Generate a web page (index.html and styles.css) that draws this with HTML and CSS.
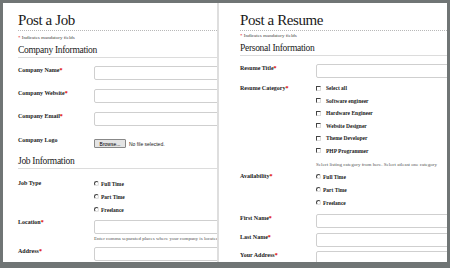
FILE: index.html
```html
<!DOCTYPE html>
<html lang="en">

<head>
    <meta charset="UTF-8">
    <meta name="viewport" content="width=device-width, initial-scale=1.0">
    <title>Post a Job / Post a Resume</title>
    <link rel="stylesheet" href="styles.css">
</head>

<body>
    <div class="frame">
        <!-- Janela da esquerda: vaga -->
        <div class="panel panel-job">
            <h1>Post a Job</h1>
            <p class="mandatory"><span class="req">*</span> Indicates mandatory fields</p>

            <h2 class="section">Company Information</h2>
            <div class="row">
                <label>Company Name<span class="req">*</span></label>
                <input type="text">
            </div>
            <div class="row">
                <label>Company Website<span class="req">*</span></label>
                <input type="text">
            </div>
            <div class="row">
                <label>Company Email<span class="req">*</span></label>
                <input type="text">
            </div>
            <div class="row row-file">
                <label>Company Logo</label>
                <div class="file">
                    <button type="button">Browse...</button>
                    <span>No file selected.</span>
                </div>
            </div>

            <h2 class="section section-job">Job Information</h2>
            <div class="row row-options">
                <label>Job Type</label>
                <div class="options">
                    <div class="option"><input type="radio" name="jobtype"> Full Time</div>
                    <div class="option"><input type="radio" name="jobtype"> Part Time</div>
                    <div class="option"><input type="radio" name="jobtype"> Freelance</div>
                </div>
            </div>
            <div class="row row-location">
                <label>Location<span class="req">*</span></label>
                <div class="field">
                    <input type="text">
                    <p class="hint">Enter comma separated places where your company is located</p>
                </div>
            </div>
            <div class="row row-address">
                <label>Address<span class="req">*</span></label>
                <input type="text">
            </div>
        </div>

        <!-- Janela da direita: currículo -->
        <div class="panel panel-resume">
            <h1>Post a Resume</h1>
            <p class="mandatory"><span class="req">*</span> Indicates mandatory fields</p>

            <h2 class="section">Personal Information</h2>
            <div class="row">
                <label>Resume Title<span class="req">*</span></label>
                <input type="text">
            </div>
            <div class="row row-options row-category">
                <label>Resume Category<span class="req">*</span></label>
                <div class="options checks">
                    <div class="option"><input type="checkbox"> Select all</div>
                    <div class="option"><input type="checkbox"> Software engineer</div>
                    <div class="option"><input type="checkbox"> Hardware Engineer</div>
                    <div class="option"><input type="checkbox"> Website Designer</div>
                    <div class="option"><input type="checkbox"> Theme Developer</div>
                    <div class="option"><input type="checkbox"> PHP Programmer</div>
                    <p class="hint">Select listing category from here. Select atleast one category</p>
                </div>
            </div>
            <div class="row row-options row-availability">
                <label>Availability<span class="req">*</span></label>
                <div class="options">
                    <div class="option"><input type="radio" name="avail"> Full Time</div>
                    <div class="option"><input type="radio" name="avail"> Part Time</div>
                    <div class="option"><input type="radio" name="avail"> Freelance</div>
                </div>
            </div>
            <div class="row row-tight">
                <label>First Name<span class="req">*</span></label>
                <input type="text">
            </div>
            <div class="row row-tight">
                <label>Last Name<span class="req">*</span></label>
                <input type="text">
            </div>
            <div class="row row-tight">
                <label>Your Address<span class="req">*</span></label>
                <input type="text">
            </div>
        </div>
    </div>
</body>

</html>
```

FILE: styles.css
```css
body {
    margin: 0;
    background-color: #707575;
    font-family: "Liberation Serif", "Times New Roman", serif;
    color: #1a1a1a;
}

.frame {
    display: flex;
    height: 268px;
    padding: 3px 3px 6px 3px;
    box-sizing: border-box;
}

.panel {
    background-color: white;
    overflow: hidden;
    padding-top: 9px;
    box-sizing: border-box;
}

.panel-job {
    width: 214px;
    padding-left: 15px;
}

.panel-resume {
    width: 230px;
    padding-left: 21px;
    border-left: 2px solid #dedede;
}

h1 {
    font-size: 15px;
    font-weight: normal;
    line-height: 16px;
    margin: 0;
    padding-bottom: 2px;
    border-bottom: 1px dotted #b8b8b8;
    letter-spacing: -0.4px;
}

.mandatory {
    font-size: 5px;
    line-height: 7px;
    margin: 3px 0 0;
    color: #444;
}

.panel-resume .mandatory {
    margin-top: 1px;
}

.req {
    color: #d00;
}

.section {
    font-size: 9.5px;
    font-weight: normal;
    line-height: 11px;
    margin: 4px 0 0;
    padding-bottom: 1px;
    border-bottom: 1px solid #dcdcdc;
    letter-spacing: -0.3px;
}

.panel-resume .section {
    margin-top: 3px;
    line-height: 12px;
}

.section-job {
    margin-top: 8px;
}

.row {
    display: flex;
    margin-top: 9px;
}

.panel-job .section + .row,
.panel-resume .section + .row {
    margin-top: 8px;
}

.row label {
    width: 76px;
    flex-shrink: 0;
    font-size: 6px;
    font-weight: bold;
    line-height: 8px;
}

.row input[type="text"] {
    display: block;
    width: 300px;
    height: 14px;
    margin: 0;
    padding: 0;
    border: 1px solid #cfcfcf;
    border-radius: 2px;
    box-sizing: border-box;
    flex-shrink: 0;
}

.field {
    display: flex;
    flex-direction: column;
}

.row-file {
    margin-top: 10px;
}

.file {
    display: flex;
    align-items: center;
    margin-top: 3px;
    font-size: 5px;
    white-space: nowrap;
}

.file button {
    width: 32px;
    height: 9px;
    padding: 0;
    margin-right: 3px;
    font-family: "Liberation Sans", Arial, sans-serif;
    font-size: 5px;
    background-color: #e4e4e4;
    border: 1px solid #888;
    border-radius: 1px;
}

.file span {
    font-family: "Liberation Sans", Arial, sans-serif;
}

.row-options {
    margin-top: 3px;
}

.row-options label {
    line-height: 13px;
}

.options {
    font-size: 5.5px;
    font-weight: bold;
    white-space: nowrap;
}

.option {
    display: flex;
    align-items: center;
    height: 13px;
}

.option input {
    appearance: none;
    width: 5px;
    height: 5px;
    margin: 0 2px 0 0;
    border: 1px solid;
    border-color: #444 #ddd #ddd #444;
    border-radius: 50%;
    box-sizing: border-box;
    background: white;
}

.option input[type="checkbox"] {
    border-radius: 0;
    margin-right: 5px;
}

.row-category {
    margin-top: 4px;
}

.row-category label {
    line-height: 12.5px;
}

.checks .option {
    height: 12.5px;
}

.hint {
    font-size: 5px;
    font-weight: normal;
    line-height: 7px;
    margin: 1px 0 0;
    color: #555;
    white-space: nowrap;
}

.checks .hint {
    margin-top: 4px;
}

.row-availability {
    margin-top: 2px;
}

.row-location {
    margin-top: 4px;
}

.row-location label {
    line-height: 4px;
}

.row-address {
    margin-top: 5px;
}

.row-tight {
    margin-top: 5px;
}

.row-tight + .row-tight {
    margin-top: 4.5px;
}
```
